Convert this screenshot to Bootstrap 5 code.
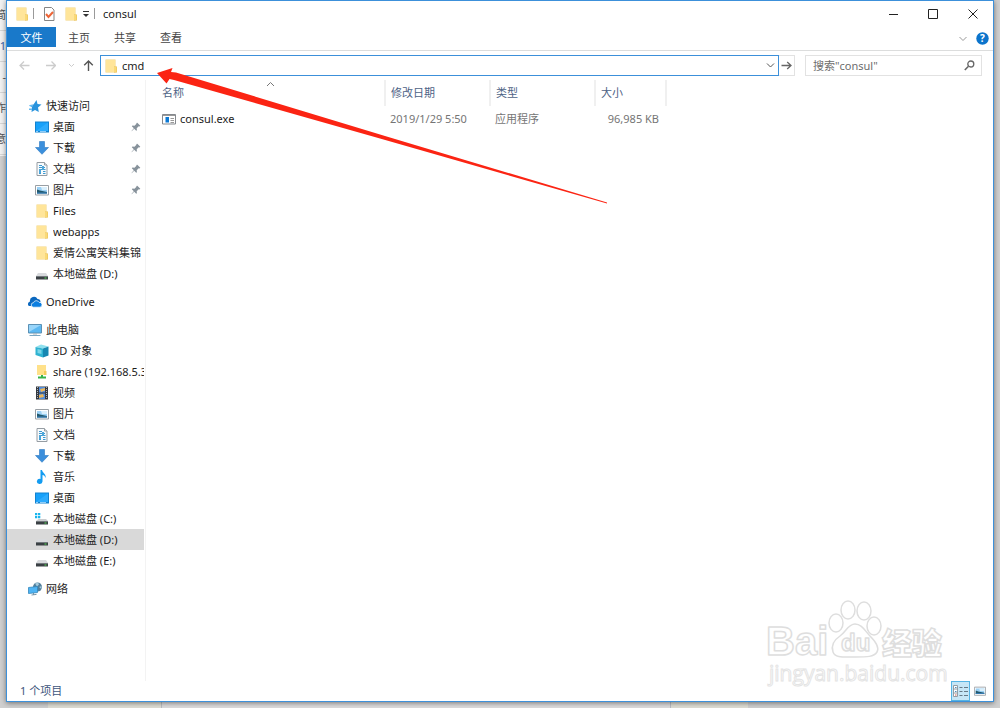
<!DOCTYPE html>
<html lang="zh-CN">
<head>
<meta charset="utf-8">
<meta name="viewport" content="width=device-width, initial-scale=1">
<title>consul</title>
<link href="https://cdn.jsdelivr.net/npm/bootstrap@5.3.0/dist/css/bootstrap.min.css" rel="stylesheet">
<script src="https://cdn.jsdelivr.net/npm/bootstrap@5.3.0/dist/js/bootstrap.bundle.min.js"></script>
<style>
  :root { --accent: #3c90da; --ink: #1c1c1c; --head: #4d6285; --soft: #757575; --line: #e2e2e2; }
  body {
    font-family: "Noto Sans", "Noto Sans CJK SC", sans-serif;
    font-size: 11px; line-height: 21px; color: var(--ink);
    padding: 0 6px 6px; background: #cfcfcf;
    background-image:
      linear-gradient(90deg, transparent 48px, #deddd4 48px 161px, #b9bcc2 161px 162px, #dcdbdc 162px 670px, #b9bcc2 670px 671px, #deddd4 671px 748px, transparent 748px),
      linear-gradient(#f1f1f1, #f1f1f1);
    background-size: 100% 6px, 7px 156px;
    background-position: left bottom, left top;
    background-repeat: no-repeat;
  }
  button, input { font: inherit; color: inherit; }
  svg { display: block; flex: none; }
  .behind { left: 0; top: 0; width: 6px; color: #555; }
  .behind span { display: block; height: 31px; border-bottom: 1px solid #d5d5d5; direction: rtl; white-space: nowrap; overflow: hidden; line-height: 30px; }
  .behind .blue { color: #3a62a8; }
  .explorer { border: 1px solid var(--accent); background: #fff; box-shadow: 0 1px 5px #0007; }
  .flatbtn { border: 0; background: transparent; padding: 0; display: flex; align-items: center; justify-content: center; }
  .titlebar { height: 26px; padding-bottom: 1px; }
  .winbtn { width: 40px; height: 24px; }
  .bar-sep { width: 1px; height: 11px; background: #9a9a9a; }
  .ribbon { height: 24px; border-bottom: 1px solid #dcdddd; }
  .ribbon-tab { width: 46px; height: 20px; color: #444; }
  .ribbon-file { width: 49px; background: #1979ca; color: #fff; }
  .toolbar { padding: 4px 11px 0 8px; height: 29px; }
  .history { height: 21px; padding-right: 2px; }
  .address { height: 21px; border: 1px solid var(--accent); padding: 0 3px; }
  .plain-input { border: 0; outline: 0; background: transparent; padding: 0; min-width: 0; height: 19px; }
  .go { width: 16px; height: 21px; border: 1px solid var(--line); border-left: 0; }
  .search { width: 177px; height: 21px; border: 1px solid var(--line); padding: 0 6px 0 7px; margin-left: 10px; color: #6d6d6d; }
  .search input::placeholder { color: #6d6d6d; opacity: 1; }
  .side { width: 139px; border-right: 1px solid #f3f3f3; padding: 15px 1px 0 0; }
  .side ul { margin-bottom: 7px; }
  .side a { display: flex; align-items: center; height: 21px; gap: 4px; padding-left: 28px; color: inherit; text-decoration: none; white-space: nowrap; overflow: hidden; }
  .side a.root-item { padding-left: 21px; }
  .side a.current { background: #d9d9d9; }
  .side .label { overflow: hidden; flex: 1; }
  .pinned { padding-right: 3px; }
  .content { padding-left: 11px; }
  .files { width: 509px; table-layout: fixed; line-height: 21px; }
  .files th { font-weight: 400; color: var(--head); padding: 2px 5px 3px; height: 25px; border-right: 2px solid #f0f0f0; position: relative; }
  .files td { color: var(--soft); padding: 2px 5px 0; white-space: nowrap; }
  .files td:first-child { color: var(--ink); }
  .files td:last-child { padding-right: 7px; }
  .sort { position: absolute; left: 109px; top: 1px; }
  .status { height: 20px; color: #40567c; padding: 0 4px 1px 13px; }
  .view { width: 19px; height: 20px; }
  .view.on { background: #c6e6f6; border: 1px solid #56b4e4; }
  .pointer { left: 150px; top: 60px; }
  .watermark { right: 46px; bottom: 10px; }
  .watermark text { font-family: "Liberation Sans", "Noto Sans CJK SC", sans-serif; }
  .watermark .site { font-family: "Open Sans", sans-serif; }
</style>
</head>
<body class="vh-100 d-flex flex-column position-relative overflow-hidden">

<svg width="0" height="0" class="position-absolute" aria-hidden="true">
  <symbol id="folder" viewBox="0 0 14 14"><path fill="#f3d27a" d="M1.500.5h10v13h-10z"/><path fill="#ffe59a" d="M2 1h9v12H2z"/><path fill="#e9bf50" d="M10 7.500h3v6h-3z"/><path fill="#f9d978" d="M10 8h2.500v5H10z"/></symbol>
  <symbol id="star" viewBox="0 0 14 14"><path fill="#2a94dd" d="M8.500 1l1 4 4 .5-3.500 3 .8 4.500-3.800-2L3.500 13l.5-4.500L2 6l3.500-.6z"/><path fill="#66baf0" d="M1 6h4v1.500H2zM1 9.500h3V11H1z"/></symbol>
  <symbol id="desktop" viewBox="0 0 14 14"><path fill="#1282cf" d="M0 1.500h14v11H0z"/><path fill="#17a1fa" d="M1 2.500h12v8.500H1z"/><path fill="#43b5ff" d="M1 11L13 2.500V11z" opacity=".5"/><path stroke="#8fcdf8" d="M1 11.500h2M5 11.500h6"/></symbol>
  <symbol id="download" viewBox="0 0 14 14"><path fill="#3b8fdc" stroke="#2c79c1" stroke-width=".6" d="M4.500.5h5v6H13.500L7 13.300.5 6.500h4z"/></symbol>
  <symbol id="document" viewBox="0 0 14 14"><path fill="#f8fbfd" stroke="#969da3" d="M2 .5h7.500L12 3v10.500H2z"/><path stroke="#3e9ad1" d="M4 3.500h3M4 5.500h6M4 7.500h3M4 9.500h2M4 11.500h2M8 7.500h2.500M8 9.500h2.500M8 11.500h2.500"/><path stroke="#4da6da" stroke-width="2" d="M8 4v4M5 7v4"/><path stroke="#969da3" fill="#e8ecef" d="M9.500.5V3H12"/></symbol>
  <symbol id="picture" viewBox="0 0 14 14"><path fill="#fff" stroke="#999fa4" d="M.5 2.500h13v9.500H.5z"/><path fill="#9bd1f6" d="M2 4h10v6.500H2z"/><path fill="#d9effc" d="M6 4h6v3H7z"/><path fill="#23596c" d="M2 6.500l3 1 7 1.500v1.500H2z"/><path fill="#367fbc" d="M2 9.500h10v1H2z"/></symbol>
  <symbol id="drive" viewBox="0 0 14 14"><path fill="#d8dadd" d="M3 6h8l2 3H1z"/><path fill="#3b4044" d="M1 9h12v3.500H1z"/><path fill="#72787c" d="M1 9h12v1H1z"/><path fill="#55dd56" d="M9.500 10.500h2v1h-2z"/></symbol>
  <symbol id="sysdrive" viewBox="0 0 14 14"><path fill="#19b5ed" d="M0 1h2.300v2.200H0zM3 1h2.300v2.200H3zM0 4h2.300v2.200H0zM3 4h2.300v2.200H3z"/><path fill="#c9cccf" d="M3.500 7H11l2 2H1z"/><path fill="#3b4044" d="M1 9h12v3.500H1z"/><path fill="#72787c" d="M1 9h12v1H1z"/><path fill="#55dd56" d="M9.500 10.500h2v1h-2z"/></symbol>
  <symbol id="cloud" viewBox="0 0 14 14"><path fill="#0b68bf" d="M1 11a2.500 2.500 0 0 1 1-4.500A4 4 0 0 1 9.500 4c2 0 3 1 3 3L8 11z"/><path fill="#0b7ee0" stroke="#fff" stroke-width=".7" d="M5.500 12.200a2.200 2.200 0 0 1 0-4.500A3 3 0 0 1 11 7.300a2.500 2.500 0 0 1 1 4.900z"/></symbol>
  <symbol id="pc" viewBox="0 0 14 14"><path fill="#5bb8f2" stroke="#5b91b5" d="M.5 1.500h13v8.500H.5z"/><path fill="#98d5fa" d="M1 2h12L1 9z"/><path fill="#a8b2b9" d="M5 10.500h4v1H5z"/><path stroke="#7aa7c2" d="M1.500 12.500h11"/></symbol>
  <symbol id="cube" viewBox="0 0 14 14"><path fill="#8fe0ee" d="M.5 3L6 .5l7.500 2L8 4.500z"/><path fill="#2fb3d1" d="M.5 3L8 4.500v9L.5 11z"/><path fill="#1687b1" d="M13.500 2.500v9l-5.500 2v-9z"/><path fill="#7ad5e8" d="M2.500 5l4 1v4l-4-1z"/></symbol>
  <symbol id="share" viewBox="0 0 14 14"><path fill="#ffe18a" d="M2 0h9v10H2z"/><path fill="#f2cc5c" d="M9 6h2.500v4H9z"/><path fill="#37b34a" d="M6 10h2v1.500h3v2H3v-2h3z"/></symbol>
  <symbol id="video" viewBox="0 0 14 14"><path fill="#34383f" d="M1 .5h12v13H1z"/><path stroke="#aeb3b8" stroke-dasharray="1 1" d="M2.500 1v12M11.500 1v12"/><path fill="#508ddd" d="M4 1h6v5.500H4zM4 7.500h6V13H4z"/><path fill="#eab65a" d="M5 3l5-1v2.500L6 6zM4 9l4-1 1 3-5 1z"/></symbol>
  <symbol id="music" viewBox="0 0 14 14"><path fill="#139cf1" d="M5.500 0H7c.5 3 4.500 4 3.500 8-.6-2-1.500-2.700-3-3v6.500A2.800 2.500 0 1 1 5.500 9z"/></symbol>
  <symbol id="network" viewBox="0 0 14 14"><circle cx="9.500" cy="5" r="4.500" fill="#527f9c"/><path fill="#a6cbdc" d="M7 1.500l3-1 1 2-2 2zM11 5l2.500-1v3z"/><path fill="#4eb4f4" stroke="#3388bd" stroke-width=".8" d="M.5 5.500l9-1v6l-9 1z"/><path stroke="#7896a9" d="M3.500 13l5-.6M5.500 11v2"/></symbol>
  <symbol id="pin" viewBox="0 0 10 10"><path fill="#87929b" d="M6.300.7l3 3-.8.700-.8-.2-2 2 .2 2-.7.600-2-2L.7 9.300.5 9l2.300-2.800-2-2 .7-.700 2 .2 2-2-.2-.700z"/></symbol>
</svg>

<div class="behind position-absolute overflow-hidden" aria-hidden="true"><span>简</span><span class="blue">1/</span><span>-</span><span>作</span><span>意</span></div>

<main class="explorer flex-grow-1 d-flex flex-column position-relative">
  <header class="titlebar d-flex align-items-center">
    <svg class="ms-2" width="14" height="14"><use href="#folder"/></svg>
    <span class="bar-sep ms-1"></span>
    <button class="flatbtn ms-2" aria-label="属性"><svg width="14" height="14" viewBox="0 0 14 14"><path fill="#fff" stroke="#858585" d="M2.500.5h7L12 3v10.500H2.500z"/><path fill="none" stroke="#ed6537" stroke-width="2" d="M4 7l2.500 3L11 5"/></svg></button>
    <button class="flatbtn ms-1 ps-1" aria-label="新建文件夹"><svg width="14" height="14"><use href="#folder"/></svg></button>
    <button class="flatbtn ms-1" aria-label="自定义快速访问工具栏"><svg width="8" height="8" viewBox="0 0 8 8"><path stroke="#333" d="M1 1.500h6"/><path fill="#333" d="M1 4h6L4 7z"/></svg></button>
    <span class="bar-sep ms-1"></span>
    <span class="ms-2">consul</span>
    <div class="ms-auto d-flex">
      <button class="flatbtn winbtn" aria-label="最小化"><svg width="10" height="10"><path stroke="#222" d="M1 5.500h9"/></svg></button>
      <button class="flatbtn winbtn" aria-label="最大化"><svg width="10" height="10"><path fill="none" stroke="#222" d="M.5.500h9v9h-9z"/></svg></button>
      <button class="flatbtn winbtn" aria-label="关闭"><svg width="10" height="10"><path stroke="#222" d="M.5.500l9 9M9.500.5l-9 9"/></svg></button>
    </div>
  </header>

  <div class="ribbon d-flex">
    <button class="flatbtn ribbon-tab ribbon-file">文件</button>
    <button class="flatbtn ribbon-tab">主页</button>
    <button class="flatbtn ribbon-tab">共享</button>
    <button class="flatbtn ribbon-tab">查看</button>
    <div class="ms-auto d-flex gap-2 align-items-center pe-1">
      <button class="flatbtn" aria-label="展开功能区"><svg width="10" height="8" viewBox="0 0 10 8"><path fill="none" stroke="#999" d="M1.500 2L5 5.500 8.500 2"/></svg></button>
      <button class="flatbtn" aria-label="帮助"><svg width="13" height="13" viewBox="0 0 13 13"><circle cx="6.500" cy="6.500" r="6.200" fill="#0b74cc"/><text x="6.500" y="10" text-anchor="middle" font-size="10" font-weight="700" fill="#fff">?</text></svg></button>
    </div>
  </div>

  <div class="toolbar d-flex">
    <div class="history d-flex align-items-center">
      <button class="flatbtn px-1" aria-label="后退"><svg width="11" height="11" viewBox="0 0 11 11"><path fill="none" stroke="#ccc" stroke-width="1.300" d="M10.500 5.500H1M5 1.500l-4 4 4 4"/></svg></button>
      <button class="flatbtn px-1 ms-2" aria-label="前进"><svg width="10" height="11" viewBox="0 0 10 11"><path fill="none" stroke="#ccc" stroke-width="1.300" d="M0 5.500h9.500M5.500 1.500l4 4-4 4"/></svg></button>
      <button class="flatbtn px-1 ms-1" aria-label="最近浏览的位置"><svg width="7" height="7" viewBox="0 0 7 7"><path fill="none" stroke="#ccc" d="M1 2l2.500 2.500L6 2"/></svg></button>
      <button class="flatbtn px-1" aria-label="上移"><svg width="11" height="11" viewBox="0 0 11 11"><path fill="none" stroke="#555" stroke-width="1.400" d="M5.500 11V1M1.200 5.200L5.500 1l4.300 4.200"/></svg></button>
    </div>
    <div class="address flex-grow-1 d-flex align-items-center">
      <svg width="14" height="14"><use href="#folder"/></svg>
      <input class="plain-input flex-grow-1 ms-1" type="text" value="cmd" aria-label="地址">
      <button class="flatbtn" aria-label="以前的位置"><svg width="9" height="9" viewBox="0 0 9 9"><path fill="none" stroke="#555" d="M1 2.500L4.500 6 8 2.500"/></svg></button>
    </div>
    <button class="flatbtn go" aria-label="转到"><svg width="11" height="11" viewBox="0 0 11 11"><path fill="none" stroke="#666" stroke-width="1.300" d="M.5 5.500H10M6.200 2L10 5.500 6.200 9"/></svg></button>
    <div class="search d-flex align-items-center">
      <input class="plain-input flex-grow-1" type="text" placeholder='搜索"consul"' aria-label="搜索">
      <button class="flatbtn" aria-label="开始搜索"><svg width="11" height="11" viewBox="0 0 11 11"><circle cx="6.800" cy="4" r="3" fill="none" stroke="#666" stroke-width="1.300"/><path stroke="#666" stroke-width="1.600" d="M4.500 6.200L.8 10"/></svg></button>
    </div>
  </div>

  <div class="flex-grow-1 d-flex">
    <nav class="side flex-shrink-0" aria-label="导航窗格">
      <ul class="list-unstyled">
        <li><a class="root-item" href="#"><svg width="14" height="14"><use href="#star"/></svg><span class="label">快速访问</span></a></li>
        <li><a class="pinned" href="#"><svg width="14" height="14"><use href="#desktop"/></svg><span class="label">桌面</span><svg width="10" height="10"><use href="#pin"/></svg></a></li>
        <li><a class="pinned" href="#"><svg width="14" height="14"><use href="#download"/></svg><span class="label">下载</span><svg width="10" height="10"><use href="#pin"/></svg></a></li>
        <li><a class="pinned" href="#"><svg width="14" height="14"><use href="#document"/></svg><span class="label">文档</span><svg width="10" height="10"><use href="#pin"/></svg></a></li>
        <li><a class="pinned" href="#"><svg width="14" height="14"><use href="#picture"/></svg><span class="label">图片</span><svg width="10" height="10"><use href="#pin"/></svg></a></li>
        <li><a href="#"><svg width="14" height="14"><use href="#folder"/></svg><span class="label">Files</span></a></li>
        <li><a href="#"><svg width="14" height="14"><use href="#folder"/></svg><span class="label">webapps</span></a></li>
        <li><a href="#"><svg width="14" height="14"><use href="#folder"/></svg><span class="label">爱情公寓笑料集锦 简</span></a></li>
        <li><a href="#"><svg width="14" height="14"><use href="#drive"/></svg><span class="label">本地磁盘 (D:)</span></a></li>
      </ul>
      <ul class="list-unstyled">
        <li><a class="root-item" href="#"><svg width="14" height="14"><use href="#cloud"/></svg><span class="label">OneDrive</span></a></li>
      </ul>
      <ul class="list-unstyled">
        <li><a class="root-item" href="#"><svg width="14" height="14"><use href="#pc"/></svg><span class="label">此电脑</span></a></li>
        <li><a href="#"><svg width="14" height="14"><use href="#cube"/></svg><span class="label">3D 对象</span></a></li>
        <li><a href="#"><svg width="14" height="14"><use href="#share"/></svg><span class="label">share (192.168.5.3)</span></a></li>
        <li><a href="#"><svg width="14" height="14"><use href="#video"/></svg><span class="label">视频</span></a></li>
        <li><a href="#"><svg width="14" height="14"><use href="#picture"/></svg><span class="label">图片</span></a></li>
        <li><a href="#"><svg width="14" height="14"><use href="#document"/></svg><span class="label">文档</span></a></li>
        <li><a href="#"><svg width="14" height="14"><use href="#download"/></svg><span class="label">下载</span></a></li>
        <li><a href="#"><svg width="14" height="14"><use href="#music"/></svg><span class="label">音乐</span></a></li>
        <li><a href="#"><svg width="14" height="14"><use href="#desktop"/></svg><span class="label">桌面</span></a></li>
        <li><a href="#"><svg width="14" height="14"><use href="#sysdrive"/></svg><span class="label">本地磁盘 (C:)</span></a></li>
        <li><a class="current" href="#"><svg width="14" height="14"><use href="#drive"/></svg><span class="label">本地磁盘 (D:)</span></a></li>
        <li><a href="#"><svg width="14" height="14"><use href="#drive"/></svg><span class="label">本地磁盘 (E:)</span></a></li>
      </ul>
      <ul class="list-unstyled mb-0">
        <li><a class="root-item" href="#"><svg width="14" height="14"><use href="#network"/></svg><span class="label">网络</span></a></li>
      </ul>
    </nav>

    <section class="content flex-grow-1">
      <table class="files">
        <colgroup><col style="width:228px"><col style="width:105px"><col style="width:105px"><col style="width:71px"></colgroup>
        <thead>
          <tr><th scope="col">名称<svg class="sort" width="9" height="6" viewBox="0 0 9 6"><path fill="none" stroke="#777" d="M1 5l3.500-3.500L8 5"/></svg></th><th scope="col">修改日期</th><th scope="col">类型</th><th scope="col">大小</th></tr>
        </thead>
        <tbody>
          <tr>
            <td><span class="d-flex align-items-center gap-1"><svg width="14" height="14" viewBox="0 0 14 14"><path fill="#fff" stroke="#85898e" d="M.5 2.500h13v9.500H.5z"/><path fill="#0a78d4" d="M3.500 5H7v5.500H3.500z"/><path stroke="#999" d="M1 3.500h12M8.500 6.500H12M8.500 8.500H12M8.500 10.500H12"/></svg>consul.exe</span></td>
            <td>2019/1/29 5:50</td><td>应用程序</td><td class="text-end">96,985 KB</td>
          </tr>
        </tbody>
      </table>
    </section>
  </div>

  <footer class="status d-flex align-items-center">
    <span>1 个项目</span>
    <div class="ms-auto d-flex">
      <button class="flatbtn view on" aria-label="详细信息"><svg width="15" height="14" viewBox="0 0 15 14"><path fill="#fff" stroke="#929da4" d="M.5 1.500h4v11h-4zM.5 5h4M.5 9h4"/><path stroke="#667986" d="M6.500 3.500h3M11 3.500h4M6.500 7.500h3M11 7.500h4M6.500 11.500h3M11 11.500h4"/><path stroke="#c95e56" d="M2 11h1.500"/><path stroke="#4d8dbc" d="M2 3.500h1.500M2 7.500h1.500"/></svg></button>
      <button class="flatbtn view" aria-label="大缩略图"><svg width="12" height="12" viewBox="0 1 14 12"><use href="#picture" width="14" height="14"/></svg></button>
    </div>
  </footer>

  <svg class="watermark position-absolute" width="184" height="94" viewBox="0 0 184 94" role="img" aria-label="Baidu 经验 jingyan.baidu.com">
    <g fill="#fff" stroke="#dedede" stroke-width="1.500">
      <ellipse cx="73" cy="26" rx="7" ry="9"/><ellipse cx="85" cy="13" rx="7" ry="9"/><ellipse cx="101" cy="14" rx="7" ry="9"/><ellipse cx="111" cy="29" rx="7" ry="9"/>
      <path d="M92 27c7 0 10 7 15 12s10 11 7 16-10 5-22 5-20 1-22-5 1-12 7-16 8-12 15-12z"/>
      <g font-weight="700" stroke-linejoin="round">
        <text x="3" y="58" font-size="40">Bai</text>
        <text x="78" y="54" font-size="24">du</text>
        <text x="119" y="57" font-size="30" font-weight="900">经验</text>
      </g>
      <text class="site" x="6" y="84" font-size="21" stroke="#e4e4e4" stroke-width="1">jingyan.baidu.com</text>
    </g>
  </svg>
  <svg class="pointer position-absolute pe-none" width="460" height="150" viewBox="157 61 460 150" aria-hidden="true"><path fill="#fb2413" d="M157 73l15.500-5-1.500 4 5 .5L385 136l222 66.500v1L380 138.500 174 80l-4.500-1-3 4.500z"/></svg>
</main>
</body>
</html>
